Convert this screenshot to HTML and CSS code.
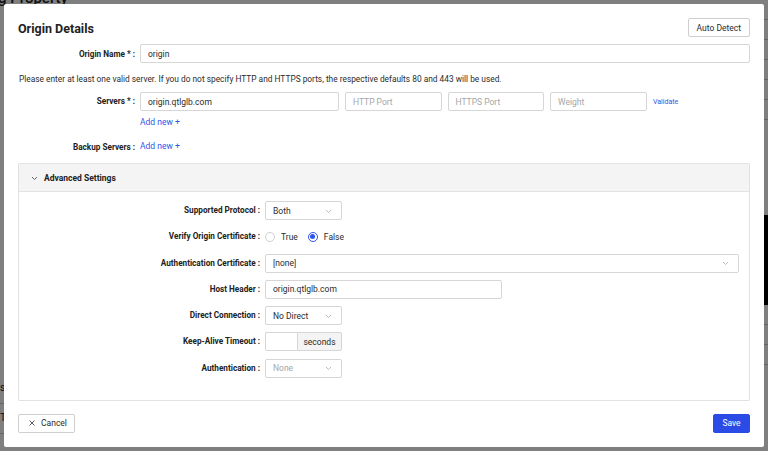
FILE: index.html
```html
<!DOCTYPE html>
<html lang="en">
<head>
<meta charset="utf-8">
<title>Origin Details</title>
<link rel="stylesheet" href="styles.css">
</head>
<body>
<div class="page">
  <div class="page-title">g Property</div>
  <div class="page-side">
    <div class="side-line"></div><div class="side-line"></div><div class="side-line"></div>
    <div class="side-line"></div><div class="side-line"></div><div class="side-line"></div>
    <div class="side-dark"></div>
    <div class="side-line"></div><div class="side-line"></div><div class="side-line"></div>
  </div>
  <div class="page-left">
    <div class="left-row">s</div>
    <div class="left-row">T</div>
  </div>
</div>
<div class="overlay"></div>

<div class="modal" role="dialog">
  <div class="modal-head">
    <h1 class="title">Origin Details</h1>
    <button class="btn">Auto Detect</button>
  </div>

  <div class="field name-field">
    <label class="lbl">Origin Name *</label>
    <div class="input">origin</div>
  </div>

  <p class="hint">Please enter at least one valid server. If you do not specify HTTP and HTTPS ports, the respective defaults 80 and 443 will be used.</p>

  <div class="field servers-field">
    <label class="lbl">Servers *</label>
    <div class="server-col">
      <div class="server-row">
        <div class="input host">origin.qtlglb.com</div>
        <div class="input port ph">HTTP Port</div>
        <div class="input port ph">HTTPS Port</div>
        <div class="input port ph">Weight</div>
        <a class="validate">Validate</a>
      </div>
      <a class="link add-new">Add new +</a>
    </div>
  </div>

  <div class="field backup-field">
    <label class="lbl">Backup Servers</label>
    <a class="link">Add new +</a>
  </div>

  <section class="panel">
    <div class="panel-head">
      <svg class="chev-head" width="7" height="5" viewBox="0 0 7 5"><path d="M1 1l2.5 2.5L6 1" fill="none" stroke="#555" stroke-width="0.9"/></svg>
      <span>Advanced Settings</span>
    </div>
    <div class="panel-body">
      <label class="lbl">Supported Protocol</label>
      <div class="select short"><span>Both</span><svg width="7" height="5" viewBox="0 0 7 5"><path d="M1 1l2.5 2.5L6 1" fill="none" stroke="#aaa" stroke-width="0.8"/></svg></div>

      <label class="lbl">Verify Origin Certificate</label>
      <div class="radios">
        <span class="radio"><span class="dot"></span>True</span>
        <span class="radio checked"><span class="dot"></span>False</span>
      </div>

      <label class="lbl">Authentication Certificate</label>
      <div class="select wide"><span>[none]</span><svg width="7" height="5" viewBox="0 0 7 5"><path d="M1 1l2.5 2.5L6 1" fill="none" stroke="#aaa" stroke-width="0.8"/></svg></div>

      <label class="lbl">Host Header</label>
      <div class="input host-header">origin.qtlglb.com</div>

      <label class="lbl">Direct Connection</label>
      <div class="select short"><span>No Direct</span><svg width="7" height="5" viewBox="0 0 7 5"><path d="M1 1l2.5 2.5L6 1" fill="none" stroke="#aaa" stroke-width="0.8"/></svg></div>

      <label class="lbl">Keep-Alive Timeout</label>
      <div class="addon-group"><div class="addon-input"></div><div class="addon">seconds</div></div>

      <label class="lbl">Authentication</label>
      <div class="select short disabled"><span>None</span><svg width="7" height="5" viewBox="0 0 7 5"><path d="M1 1l2.5 2.5L6 1" fill="none" stroke="#aaa" stroke-width="0.8"/></svg></div>
    </div>
  </section>

  <div class="footer">
    <button class="btn cancel"><svg width="6" height="6" viewBox="0 0 6 6"><path d="M0.5 0.5l5 5M5.5 0.5l-5 5" stroke="#333" stroke-width="0.8"/></svg>Cancel</button>
    <button class="btn primary">Save</button>
  </div>
</div>
</body>
</html>
```

FILE: styles.css
```css
* { box-sizing: border-box; }

html, body {
  margin: 0;
  width: 768px;
  height: 451px;
  overflow: hidden;
}

body {
  position: relative;
  background: #fff;
  font-family: Roboto, "Liberation Sans", Arial, sans-serif;
  font-size: 8.5px;
  color: #2b2b2b;
}

/* underlying page */
.page { width: 768px; height: 451px; }
.page-title {
  font-size: 15px;
  font-weight: 500;
  line-height: 15px;
  margin-top: -9px;
  margin-left: -2px;
  color: #222;
}
.page-side {
  position: absolute;
  right: 0;
  top: 0;
  width: 6px;
  display: flex;
  flex-direction: column;
}
.side-line { height: 20px; border-bottom: 1px solid #c8c8c8; }
.side-dark { height: 90px; margin-top: 95px; background: #000; }
.page-left {
  position: absolute;
  left: 0;
  top: 374px;
  width: 6px;
  display: flex;
  flex-direction: column;
}
.left-row {
  height: 30px;
  line-height: 20px;
  font-size: 10px;
  color: #222;
  border-bottom: 1px solid #d0d0d0;
  padding-top: 4px;
}

.overlay {
  position: absolute;
  inset: 0;
  background: rgba(0, 0, 0, 0.5);
}

/* modal */
.modal {
  position: absolute;
  left: 4px;
  top: 4px;
  width: 760px;
  height: 443px;
  background: #fff;
  border-radius: 2px;
  padding: 14px;
  display: flex;
  flex-direction: column;
}

.modal-head {
  display: flex;
  justify-content: space-between;
  align-items: center;
  height: 19px;
}
.title {
  margin: 0;
  font-size: 12.5px;
  font-weight: 700;
  color: #222;
  line-height: 19px;
  padding-top: 1px;
}

.btn {
  font-family: inherit;
  font-size: 8.5px;
  color: #2b2b2b;
  height: 19px;
  background: #fff;
  border: 1px solid #cfcfcf;
  border-radius: 2px;
  padding: 0 8px;
  display: inline-flex;
  align-items: center;
  justify-content: center;
  gap: 5px;
}

.field {
  display: grid;
  grid-template-columns: 117px 1fr;
  column-gap: 5px;
  align-items: center;
}
.lbl {
  font-size: 8.2px;
  font-weight: 700;
  color: #222;
  text-align: right;
  white-space: nowrap;
}
.lbl::after {
  content: ":";
  margin-left: 2px;
}

.input {
  height: 19px;
  border: 1px solid #d6d6d6;
  border-radius: 2px;
  padding: 0 7px;
  display: flex;
  align-items: center;
  color: #2b2b2b;
  white-space: nowrap;
  background: #fff;
}
.input.ph { color: #a6a6a6; }

.name-field { margin-top: 7px; }

.hint {
  margin: 10px 0 0 1px;
  line-height: 12px;
  font-size: 8.35px;
}

.servers-field { margin-top: 7px; align-items: start; }
.servers-field .lbl { line-height: 19px; }
.server-col { display: flex; flex-direction: column; align-items: flex-start; }
.server-row { display: flex; align-items: center; gap: 6px; }
.host { width: 199px; }
.port { width: 96.5px; }
.validate {
  color: #2f54eb;
  font-size: 7px;
  margin-left: 0.5px;
  padding-top: 1px;
}
.link { color: #2f54eb; line-height: 19px; }
.add-new { margin-top: 2px; }

.backup-field { margin-top: 5px; height: 19px; }

.panel {
  margin-top: 7px;
  border: 1px solid #e2e2e2;
  border-radius: 1px;
}
.panel-head {
  height: 28px;
  background: #f4f4f4;
  border-bottom: 1px solid #e2e2e2;
  display: flex;
  align-items: center;
  padding-left: 12px;
  gap: 6px;
  font-weight: 700;
  color: #222;
}
.chev-head { margin-top: 1px; }

.panel-body {
  display: grid;
  grid-template-columns: 241px auto;
  column-gap: 5px;
  row-gap: 7.3px;
  align-items: center;
  justify-items: start;
  padding: 9px 10px 22px 0;
}
.panel-body .lbl { justify-self: end; line-height: 19px; }

.select {
  height: 19px;
  border: 1px solid #d6d6d6;
  border-radius: 2px;
  padding: 0 9px 0 7px;
  display: flex;
  align-items: center;
  justify-content: space-between;
  background: #fff;
}
.select svg { margin-top: 1px; }
.select.short { width: 77px; }
.select.wide { width: 474px; justify-self: stretch; }
.select.disabled span { color: #a6a6a6; }

.host-header { width: 237px; }

.radios { display: flex; align-items: center; height: 19px; gap: 10px; }
.radio { display: inline-flex; align-items: center; gap: 6px; }
.dot {
  width: 10px;
  height: 10px;
  border: 1px solid #cfcfcf;
  border-radius: 50%;
  display: inline-flex;
  align-items: center;
  justify-content: center;
}
.radio.checked .dot { border-color: #2f54eb; }
.radio.checked .dot::after {
  content: "";
  width: 5px;
  height: 5px;
  border-radius: 50%;
  background: #2f54eb;
}

.addon-group { display: flex; height: 19px; }
.addon-input {
  width: 32px;
  border: 1px solid #d6d6d6;
  border-right: none;
  border-radius: 2px 0 0 2px;
}
.addon {
  width: 45px;
  border: 1px solid #d6d6d6;
  border-radius: 0 2px 2px 0;
  background: #f4f4f4;
  display: flex;
  align-items: center;
  justify-content: center;
}

.footer {
  margin-top: 13px;
  display: flex;
  justify-content: space-between;
}
.cancel { width: 57px; padding: 0 0 0 3px; gap: 6px; }
.primary {
  width: 37px;
  padding: 0;
  background: #2b4be6;
  border-color: #2b4be6;
  color: #fff;
}
```
